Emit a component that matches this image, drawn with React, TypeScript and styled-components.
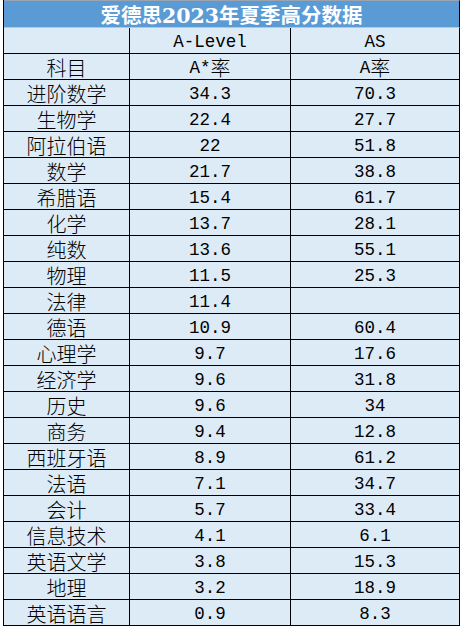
import styled, { createGlobalStyle } from "styled-components";

const GlobalStyle = createGlobalStyle`
  html, body {
    margin: 0;
    padding: 0;
    background: #ffffff;
  }
`;

type Row = [string, string, string];

const rows: Row[] = [
  ["进阶数学", "34.3", "70.3"],
  ["生物学", "22.4", "27.7"],
  ["阿拉伯语", "22", "51.8"],
  ["数学", "21.7", "38.8"],
  ["希腊语", "15.4", "61.7"],
  ["化学", "13.7", "28.1"],
  ["纯数", "13.6", "55.1"],
  ["物理", "11.5", "25.3"],
  ["法律", "11.4", ""],
  ["德语", "10.9", "60.4"],
  ["心理学", "9.7", "17.6"],
  ["经济学", "9.6", "31.8"],
  ["历史", "9.6", "34"],
  ["商务", "9.4", "12.8"],
  ["西班牙语", "8.9", "61.2"],
  ["法语", "7.1", "34.7"],
  ["会计", "5.7", "33.4"],
  ["信息技术", "4.1", "6.1"],
  ["英语文学", "3.8", "15.3"],
  ["地理", "3.2", "18.9"],
  ["英语语言", "0.9", "8.3"],
];

const Page = styled.div`
  padding-left: 3px;
  width: 459px;
`;

const Sheet = styled.div`
  width: 457px;
  border-left: 1px solid #000;
  box-sizing: border-box;
`;

const Title = styled.div`
  height: 28px;
  box-sizing: border-box;
  border-top: 1px solid #9aa4b0;
  border-right: 1px solid #000;
  border-bottom: 1px solid #b4c6dc;
  background: #5b9bd5;
  color: #ffffff;
  font-family: "DejaVu Serif", "Noto Sans CJK SC", serif;
  font-weight: 700;
  font-size: 20.5px;
  line-height: 30px;
  text-align: center;
  white-space: nowrap;
`;

const Grid = styled.div`
  display: grid;
  grid-template-columns: 126px 161px 169px;
  grid-auto-rows: 26px;
`;

const Cell = styled.div<{ $kind?: "subject" | "value" }>`
  box-sizing: border-box;
  border-right: 1px solid #000;
  border-bottom: 1px solid #000;
  background: #ddebf7;
  color: #000;
  display: flex;
  align-items: center;
  justify-content: center;
  padding-top: 3px;
  white-space: nowrap;
  font-family: ${(p) =>
    p.$kind === "subject"
      ? `"Noto Sans CJK SC", sans-serif`
      : `"Liberation Mono", "Noto Sans CJK SC", monospace`};
  font-weight: ${(p) => (p.$kind === "subject" ? 300 : 400)};
  font-size: ${(p) => (p.$kind === "subject" ? "20px" : "17.5px")};
  line-height: 20px;
`;

const Han = styled.span`
  font-family: "Noto Sans CJK SC", sans-serif;
  font-weight: 300;
  font-size: 20px;
`;

const Row = ({ subject, level, as }: { subject: string; level: string; as: string }) => (
  <>
    <Cell $kind="subject">{subject}</Cell>
    <Cell $kind="value">{level}</Cell>
    <Cell $kind="value">{as}</Cell>
  </>
);

export default function App() {
  return (
    <Page>
      <GlobalStyle />
      <Sheet>
        <Title>爱德思2023年夏季高分数据</Title>
        <Grid>
          <Cell $kind="subject" />
          <Cell $kind="value">A-Level</Cell>
          <Cell $kind="value">AS</Cell>
          <Cell $kind="subject">科目</Cell>
          <Cell $kind="value">
            A*<Han>率</Han>
          </Cell>
          <Cell $kind="value">
            A<Han>率</Han>
          </Cell>
          {rows.map(([subject, level, as]) => (
            <Row key={subject} subject={subject} level={level} as={as} />
          ))}
        </Grid>
      </Sheet>
    </Page>
  );
}
